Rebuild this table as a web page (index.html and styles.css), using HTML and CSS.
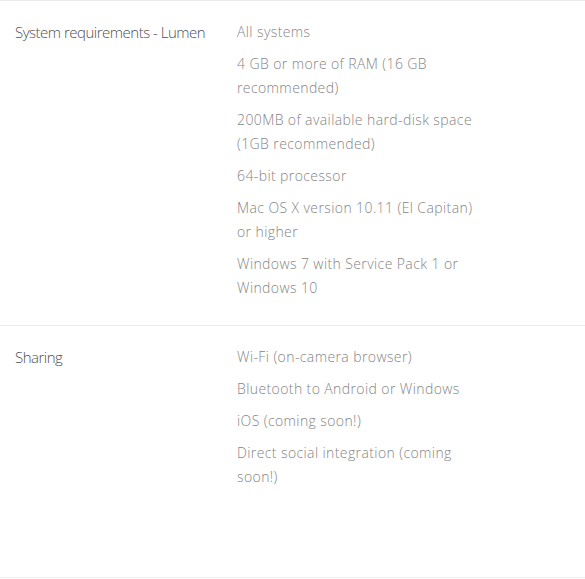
FILE: index.html
```html
<!DOCTYPE html>
<html lang="en">
<head>
<meta charset="UTF-8">
<meta name="viewport" content="width=device-width, initial-scale=1.0">
<title>Specs | Lumen</title>
<link rel="stylesheet" href="styles.css">
</head>
<body>
    <div class="specs">
        <div class="spec-row first">
            <div class="spec-label">System requirements - Lumen</div>
            <div class="spec-values">
                <p>All systems</p>
                <p>4 GB or more of RAM (16 GB recommended)</p>
                <p>200MB of available hard-disk space (1GB recommended)</p>
                <p>64-bit processor</p>
                <p>Mac OS X version 10.11 (El Capitan) or higher</p>
                <p>Windows 7 with Service Pack 1 or Windows 10</p>
            </div>
        </div>
        <div class="spec-row last">
            <div class="spec-label">Sharing</div>
            <div class="spec-values">
                <p>Wi-Fi (on-camera browser)</p>
                <p>Bluetooth to Android or Windows</p>
                <p>iOS (coming soon!)</p>
                <p>Direct social integration (coming soon!)</p>
            </div>
        </div>
    </div>
</body>
</html>
```

FILE: styles.css
```css
body {
    margin: 0;
    padding: 0;
    background: #ffffff;
    font-family: "Open Sans", sans-serif;
}

.specs {
    border-top: 1px solid #ececec;
}

.spec-row {
    display: flex;
    border-bottom: 1px solid #ececec;
    padding: 19px 0 0 15px;
}

.spec-row.first {
    height: 305px;
}

.spec-row.last {
    height: 232px;
}

.spec-label {
    width: 222px;
    font-size: 15px;
    font-weight: 300;
    line-height: 24px;
    color: #4f4f4f;
    letter-spacing: -0.5px;
}

.spec-values {
    width: 245px;
    font-size: 14px;
    font-weight: 300;
    line-height: 24px;
    color: #858585;
    letter-spacing: 0.4px;
}

.spec-values p {
    margin: 0 0 8px 0;
}
```
